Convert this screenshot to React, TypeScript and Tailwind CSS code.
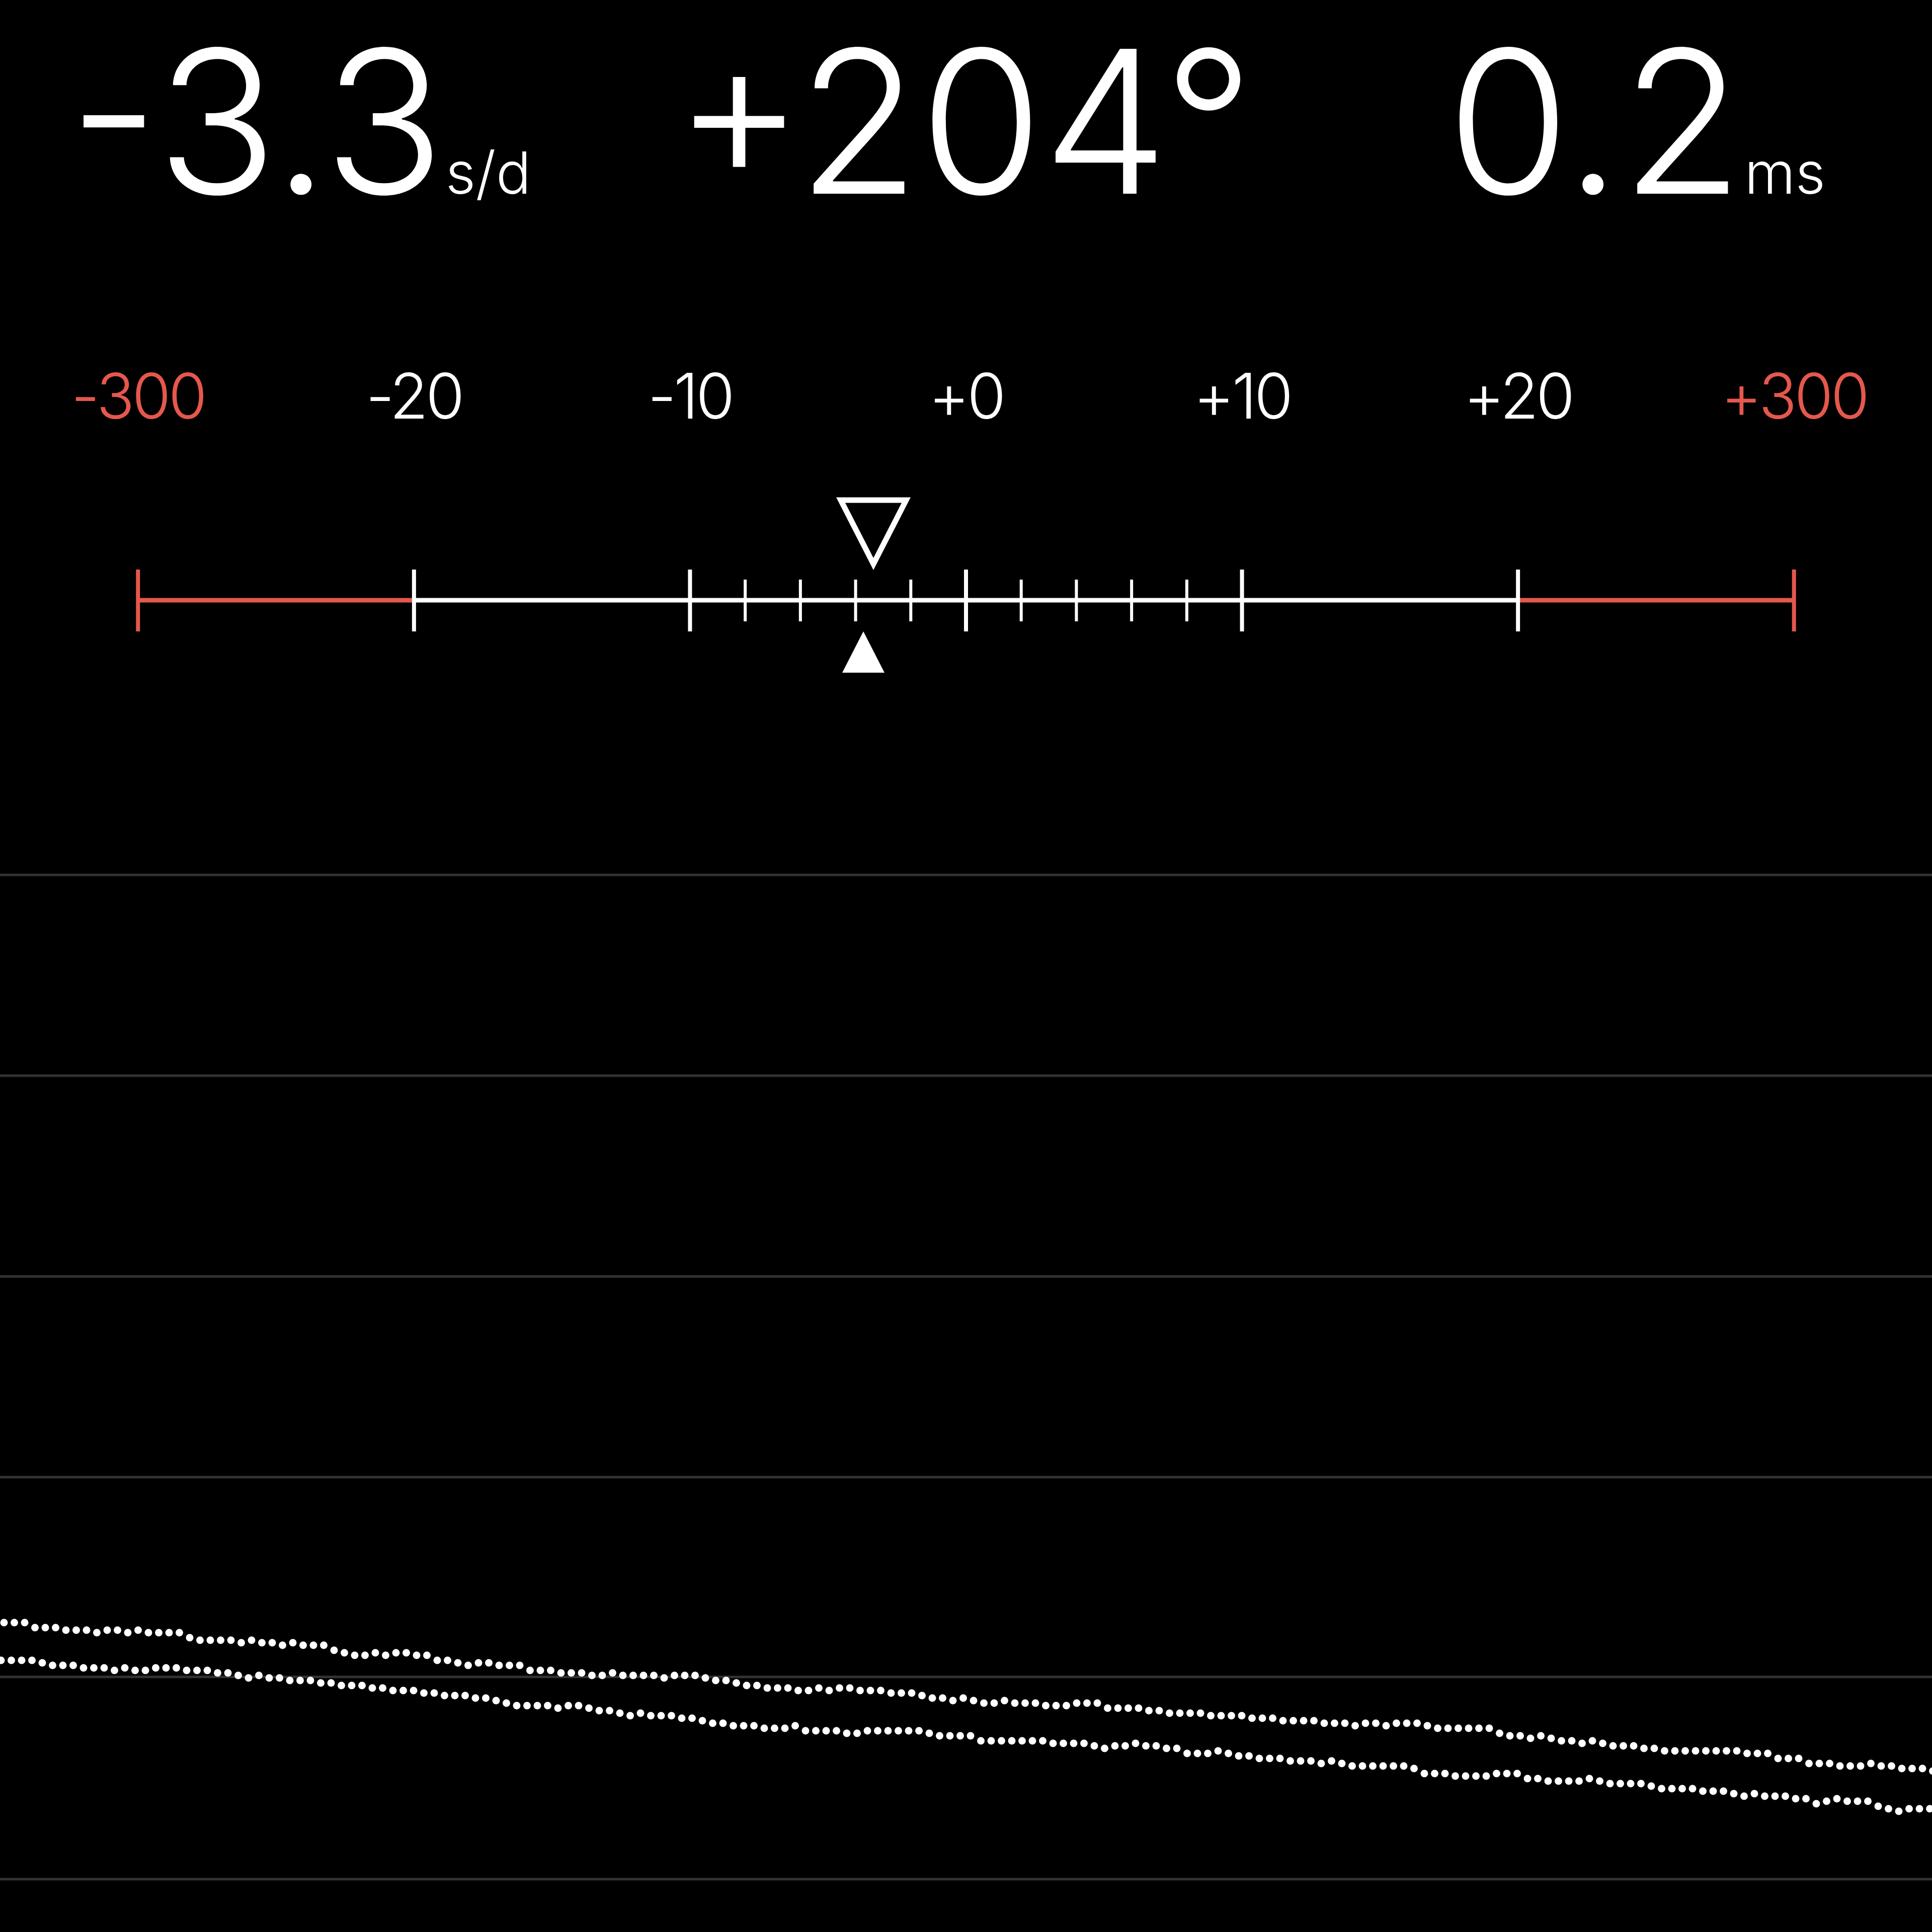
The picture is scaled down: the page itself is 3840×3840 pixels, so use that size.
import React from 'react';

const RED = '#e5584c';

// positions on the 3840px wide canvas
const COL = 3840 / 7;
const major = Array.from({ length: 7 }, (_, i) => COL / 2 + COL * i);

const labels = [
  { text: '-300', red: true },
  { text: '-20', red: false },
  { text: '-10', red: false },
  { text: '+0', red: false },
  { text: '+10', red: false },
  { text: '+20', red: false },
  { text: '+300', red: true },
];

type Pt = [number, number];

const topTrend: Pt[] = [
  [0, 1823], [980, 1906], [1960, 1984], [2450, 2004], [2940, 2041], [3430, 2083], [3840, 2125],
];
const bottomTrend: Pt[] = [
  [0, 1894], [490, 1935], [980, 1984], [1470, 2024], [1960, 2053], [2450, 2082], [2940, 2127], [3430, 2163], [3840, 2200],
];

function interp(pts: Pt[], x: number) {
  for (let i = 0; i < pts.length - 1; i++) {
    const [x0, y0] = pts[i];
    const [x1, y1] = pts[i + 1];
    if (x >= x0 && x <= x1) return y0 + ((y1 - y0) * (x - x0)) / (x1 - x0);
  }
  return pts[pts.length - 1][1];
}

// small deterministic wander so the trace looks like sampled data
function makeDots(pts: Pt[], start: number, seed: number) {
  let s = seed;
  const rnd = () => {
    s = (s * 1103515245 + 12345) % 2147483648;
    return s / 2147483648;
  };
  const out: Pt[] = [];
  let off = 0;
  for (let x = start; x < 3850; x += 20.5) {
    const r = rnd();
    if (r < 0.22) off -= 5;
    else if (r > 0.78) off += 5;
    off = Math.max(-6, Math.min(6, off));
    out.push([x, Math.round((interp(pts, x) + off) / 5) * 5]);
  }
  return out;
}

const topDots = makeDots(topTrend, 8, 7);
const bottomDots = makeDots(bottomTrend, 2, 31);

const Reading: React.FC<{ value: string; unit?: string; className?: string }> = ({ value, unit, className }) => (
  <div className={`flex items-baseline justify-center ${className ?? ''}`}>
    <span className="text-[396px] leading-[1.22]">{value}</span>
    {unit && <span className="text-[116px] leading-[1.22] ml-[2px]">{unit}</span>}
  </div>
);

const Scale: React.FC = () => {
  const minor: number[] = [];
  for (let k = 1; k < 5; k++) {
    minor.push(major[2] + (COL / 5) * k);
    minor.push(major[3] + (COL / 5) * k);
  }
  return (
    <svg width={3840} height={551} viewBox="0 0 3840 551" className="block shrink-0">
      <line x1={major[0]} y1={344} x2={major[1]} y2={344} stroke={RED} strokeWidth={9} />
      <line x1={major[1]} y1={344} x2={major[5]} y2={344} stroke="#fff" strokeWidth={9} />
      <line x1={major[5]} y1={344} x2={major[6]} y2={344} stroke={RED} strokeWidth={9} />
      {major.map((x, i) => (
        <line
          key={i}
          x1={x}
          y1={283}
          x2={x}
          y2={406}
          stroke={i === 0 || i === 6 ? RED : '#fff'}
          strokeWidth={8}
        />
      ))}
      {minor.map((x, i) => (
        <line key={i} x1={x} y1={303} x2={x} y2={386} stroke="#fff" strokeWidth={6} />
      ))}
      {/* target marker */}
      <polygon
        points="1671,145 1801,145 1736,272"
        fill="none"
        stroke="#fff"
        strokeWidth={11}
        strokeLinejoin="miter"
      />
      {/* current reading */}
      <polygon points="1716,406 1674,488 1758,488" fill="#fff" />
    </svg>
  );
};

const Graph: React.FC = () => {
  const grid = [339, 738, 1137, 1536, 1933, 2335];
  return (
    <svg width={3840} height={2440} viewBox="0 0 3840 2440" className="block shrink-0">
      {grid.map((y) => (
        <line key={y} x1={0} y1={y} x2={3840} y2={y} stroke="#333" strokeWidth={5} />
      ))}
      {topDots.map(([x, y], i) => (
        <circle key={`t${i}`} cx={x} cy={y} r={7.5} fill="#fff" />
      ))}
      {bottomDots.map(([x, y], i) => (
        <circle key={`b${i}`} cx={x} cy={y} r={7.5} fill="#fff" />
      ))}
    </svg>
  );
};

export default function App() {
  return (
    <div className="w-[3840px] h-[3840px] bg-black text-white overflow-hidden flex flex-col font-['Inter','Helvetica_Neue',sans-serif] font-light">
      <div className="grid grid-cols-3 h-[724px] shrink-0">
        <Reading value="-3.3" unit="s/d" className="pr-[88px]" />
        <Reading value="+204°" className="pr-[8px]" />
        <Reading value="0.2" unit="ms" className="pl-[104px]" />
      </div>
      <div className="grid grid-cols-7 h-[125px] shrink-0 text-[125px] leading-none text-center tracking-[-5px]">
        {labels.map((l) => (
          <span key={l.text} className={l.red ? 'text-[#e5584c]' : 'text-white'}>
            {l.text}
          </span>
        ))}
      </div>
      <Scale />
      <Graph />
    </div>
  );
}
